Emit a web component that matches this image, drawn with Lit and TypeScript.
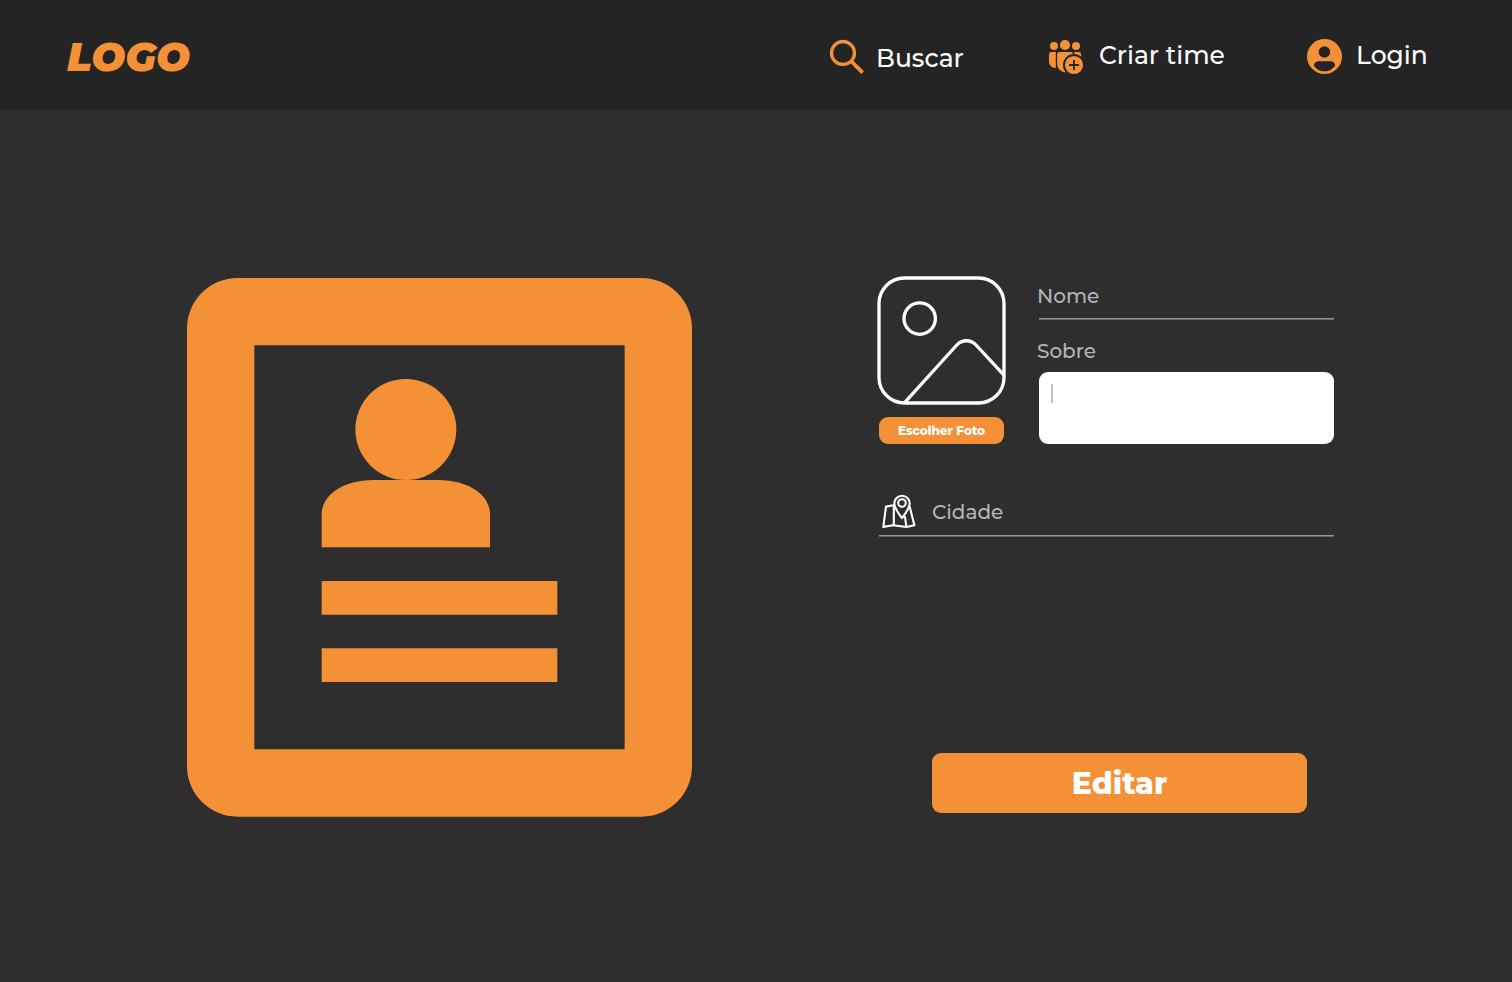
import { LitElement, html, css } from "lit";
import { customElement } from "lit/decorators.js";

@customElement("app-root")
export class AppRoot extends LitElement {
  static styles = css`
    :host {
      display: block;
      height: 982px;
      background: #2e2e2e;
      color: #fff;
      font-family: Montserrat, Inter, "Open Sans", sans-serif;
      overflow: hidden;
    }
    * { box-sizing: border-box; }
    svg { display: block; flex: none; overflow: visible; }
    header {
      display: flex;
      align-items: flex-start;
      height: 110px;
      padding: 38px 84px 0 67px;
      background: #242424;
    }
    .logo {
      width: 126px;
      margin-right: auto;
      color: #f49136;
      font-size: 40px;
      font-weight: 900;
      font-style: italic;
      line-height: 38px;
      white-space: nowrap;
    }
    nav { display: flex; }
    .item {
      display: flex;
      gap: 14px;
      font-size: 25px;
      font-weight: 500;
      line-height: 34px;
      white-space: nowrap;
    }
    .search { width: 219px; gap: 12px; }
    .search span { padding-top: 3px; }
    .team { width: 259px; gap: 14px; }
    .login { width: 122px; }
    main {
      display: flex;
      align-items: flex-start;
      padding: 166px 178px 0 187px;
    }
    .badge { margin-top: 2px; }
    .form { width: 457px; margin-left: auto; }
    .top { display: flex; justify-content: space-between; }
    .photo { width: 128px; }
    .pick {
      display: block;
      width: 125px;
      height: 27px;
      margin: 13px 0 0 2px;
      padding: 0;
      border: 0;
      border-radius: 9px;
      background: #f49136;
      color: #fff;
      font: 800 12px/27px Montserrat, Inter, sans-serif;
      text-align: center;
      white-space: nowrap;
    }
    .fields { width: 297px; color: #b5b5b5; }
    label { display: block; font-size: 20px; font-weight: 500; line-height: 26px; white-space: nowrap; }
    .fields label:first-child { margin-top: 7px; }
    .rule { height: 2px; background: linear-gradient(#949496 50%, #68686a 50%); }
    .fields .rule { margin: 9px 0 18px 2px; }
    .about {
      height: 72px;
      margin: 8px 0 0 2px;
      padding: 12px;
      border-radius: 9px;
      background: #fff;
    }
    .caret { width: 2px; height: 19px; background: #bfbfbf; }
    .city { display: flex; gap: 15px; margin: 50px 0 0 5px; height: 41px; color: #b5b5b5; }
    .city label { padding-top: 5px; }
    .form > .rule { margin: 0 0 0 2px; width: 455px; }
    .edit {
      display: block;
      width: 375px;
      height: 60px;
      margin: 216px 0 0 55px;
      padding: 1px 0 0;
      border: 0;
      border-radius: 9px;
      background: #f49136;
      color: #fff;
      font: 800 30px/60px Montserrat, Inter, sans-serif;
      text-align: center;
    }
  `;

  render() {
    return html`
      <header>
        <div class="logo">LOGO</div>
        <nav>
          <div class="item search">
            <svg width="36" height="38" viewBox="828 38 36 38" fill="none" stroke="#f49136">
              <circle cx="843" cy="53" r="11.5" stroke-width="3.3" />
              <path d="M851.5 61.5 862.6 72.7" stroke-width="3.8" />
            </svg>
            <span>Buscar</span>
          </div>
          <div class="item team">
            <svg width="38" height="38" viewBox="1047 38 38 38" fill="#f49136">
              <circle cx="1054" cy="46" r="4" />
              <circle cx="1065" cy="45" r="5.1" />
              <circle cx="1076" cy="46" r="4" />
              <path d="M1055.8 52h-4.6a2.2 2.2 0 0 0-2.2 2.2v7.6a6.2 6.2 0 0 0 6.8 6.1z" />
              <path d="M1059.4 52h11.4a2.2 2.2 0 0 1 2.2 2.2v18h-8a8 8 0 0 1-7.9-7.9v-10a2.3 2.3 0 0 1 2.3-2.3z" />
              <path d="M1074.3 52h4.5a2.3 2.3 0 0 1 2.3 2.3v8h-6.3z" />
              <circle cx="1074" cy="65" r="11" fill="#242424" />
              <circle cx="1074" cy="65" r="9.1" />
              <path d="M1074 60v10M1069 65h10" stroke="#242424" stroke-width="1.8" />
            </svg>
            <span>Criar time</span>
          </div>
          <div class="item login">
            <svg width="36" height="38" viewBox="1306 38 36 38" fill="#f49136">
              <circle cx="1324.5" cy="56.5" r="17.5" />
              <circle cx="1324.4" cy="52" r="5.8" fill="#242424" />
              <path fill="#242424" d="M1318.6 61.3h11.8c2.7 0 4.7 1.7 4.7 4.1-2 3.4-6 5.9-10.6 5.9s-8.6-2.5-10.6-5.9c0-2.4 2-4.1 4.7-4.1z" />
            </svg>
            <span>Login</span>
          </div>
        </nav>
      </header>
      <main>
        <svg class="badge" width="505" height="538.67" viewBox="0 0 15 16" fill="#f49136">
          <path fill-rule="evenodd" d="M1.5 0h12A1.5 1.5 0 0 1 15 1.5v13a1.5 1.5 0 0 1-1.5 1.5h-12A1.5 1.5 0 0 1 0 14.5v-13A1.5 1.5 0 0 1 1.5 0zM2 2v12h11V2z" />
          <circle cx="6.5" cy="4.5" r="1.5" />
          <path d="M4 8V7a1.5 1 0 0 1 1.5-1h2A1.5 1 0 0 1 9 7v1zM4 9h7v1H4zM4 11h7v1H4z" />
        </svg>
        <section class="form">
          <div class="top">
            <div class="photo">
              <svg width="128" height="128" viewBox="877 276 128 128" fill="none" stroke="#fff" stroke-width="3.3">
                <rect x="879" y="278" width="125" height="125" rx="25.5" />
                <circle cx="919.7" cy="318.6" r="15.7" />
                <path d="M904.4 402.8 956.8 345A13 13 0 0 1 976 345L1004 375.2" />
              </svg>
              <button class="pick">Escolher Foto</button>
            </div>
            <div class="fields">
              <label>Nome</label>
              <div class="rule"></div>
              <label>Sobre</label>
              <div class="about"><div class="caret"></div></div>
            </div>
          </div>
          <div class="city">
            <svg width="35" height="35" viewBox="882 494 35 35" fill="none" stroke="#fff" stroke-width="2.1" stroke-linejoin="round" stroke-linecap="round">
              <path d="M893.6 505.3 886 506.6 883.3 526.9 893.2 525.2 906.4 527 914.4 525.3 909.8 507" />
              <path d="M893.8 505.5V525M905 517 906.4 526.8" />
              <path d="M902 518.2C898.5 513.5 894.3 508 894.3 503.4a7.7 7.7 0 0 1 15.4 0C909.7 508 905.5 513.5 902 518.2z" />
              <circle cx="902" cy="503" r="3.8" />
            </svg>
            <label>Cidade</label>
          </div>
          <div class="rule"></div>
          <button class="edit">Editar</button>
        </section>
      </main>
    `;
  }
}
